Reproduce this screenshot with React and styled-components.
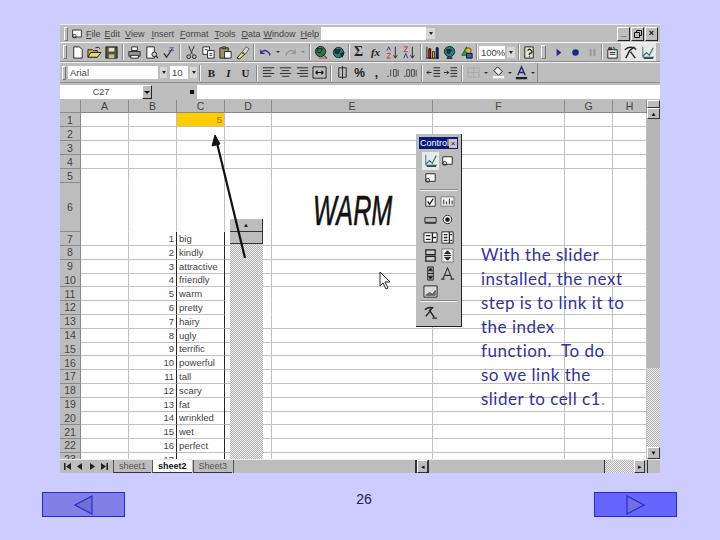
import React from "react";
import styled, { createGlobalStyle } from "styled-components";

const Global = createGlobalStyle`
  html, body { margin: 0; padding: 0; background: #ccccff; }
  body { font-family: "Liberation Sans", Arial, sans-serif; }
`;

const dither = `repeating-conic-gradient(#b4b4b4 0 25%, #ececec 0 50%) 0 0 / 2px 2px`;
const GRAY = "#bdbdbd";

const Slide = styled.div`
  width: 720px;
  height: 540px;
  padding-top: 24px;
  box-sizing: border-box;
  overflow: hidden;
`;
const Excel = styled.div`
  width: 600px;
  margin-left: 60px;
  background: ${GRAY};
  color: #333;
  font-size: 9px;
`;
const MenuBar = styled.div`
  height: 18px;
  display: flex;
  align-items: center;
  padding-left: 2px;
  box-sizing: border-box;
  border-top: 1px solid #eee;
`;
const Grip = styled.div`
  width: ${(p) => p.$w || 3}px;
  height: 14px;
  flex: none;
  margin: 0 ${(p) => p.$mr ?? 2}px 0 ${(p) => p.$ml ?? 2}px;
  border: 1px solid;
  border-color: #fff #777 #777 #fff;
  box-sizing: border-box;
`;
const MenuIcon = styled.span`
  margin-right: 2px;
  display: flex;
`;
const MenuItem = styled.span`
  margin-right: ${(p) => p.$gap}px;
  font-size: 9px;
  color: #444;
  &::first-letter { text-decoration: underline; }
`;
const QuestionBox = styled.div`
  width: 105px;
  height: 13px;
  background: #fff;
  margin-left: 2px;
  display: flex;
  flex: none;
`;
const WinButtons = styled.div`
  margin-left: auto;
  display: flex;
  gap: 1px;
  padding-right: 2px;
`;
const WinButton = styled.div`
  width: 11px;
  height: 12px;
  border: 1px solid;
  border-color: #fff #222 #222 #fff;
  font: bold 9px/11px "Liberation Sans", sans-serif;
  color: #111;
  text-align: center;
  display: flex;
  align-items: center;
  justify-content: center;
`;
const ToolBar = styled.div`
  height: ${(p) => p.$h}px;
  display: flex;
  align-items: center;
  box-sizing: border-box;
  border-top: 1px solid #f4f4f4;
  border-bottom: 1px solid #8a8a8a;
`;
const ToolStrip = styled.div`
  display: flex;
  align-items: center;
  height: 100%;
  width: ${(p) => p.$w}px;
  border-right: 1px solid #8a8a8a;
  box-sizing: border-box;
`;
const Tool = styled.div`
  width: ${(p) => p.$w || 17}px;
  height: 18px;
  flex: none;
  display: flex;
  align-items: center;
  justify-content: center;
  font: ${(p) => p.$font || "bold 11px 'Liberation Serif', serif"};
  color: #222;
  background: ${(p) => (p.$on ? "#e8e8e8" : "transparent")};
`;
const Sep = styled.div`
  width: 2px;
  height: 16px;
  flex: none;
  margin: 0 ${(p) => p.$mr ?? 2}px 0 ${(p) => p.$ml ?? 2}px;
  border-left: 1px solid #8a8a8a;
  border-right: 1px solid #f4f4f4;
  box-sizing: border-box;
`;
const Caret = styled.div`
  width: ${(p) => p.$w || 8}px;
  flex: none;
  display: flex;
  justify-content: center;
  &::after {
    content: "";
    border-left: 2px solid transparent;
    border-right: 2px solid transparent;
    border-top: 2px solid ${(p) => p.$c || "#333"};
  }
`;
const Combo = styled.div`
  width: ${(p) => p.$w}px;
  margin-left: ${(p) => p.$ml || 0}px;
  height: 13px;
  flex: none;
  background: #fff;
  font-size: 9.5px;
  line-height: 13px;
  color: #444;
  padding-left: 2px;
  box-sizing: border-box;
`;
const ComboArrow = styled.div`
  width: ${(p) => p.$w || 8}px;
  height: 11px;
  margin-left: ${(p) => p.$ml ?? 1}px;
  flex: none;
  background: #d8d8d8;
  display: flex;
  align-items: center;
  justify-content: center;
  &::after {
    content: "";
    border-left: 2px solid transparent;
    border-right: 2px solid transparent;
    border-top: 3px solid #222;
  }
`;
const FormulaBar = styled.div`
  height: 14px;
  margin: 2px 0 1px;
  display: flex;
  align-items: stretch;
`;
const NameBox = styled.div`
  width: 82px;
  background: #fff;
  text-align: center;
  font-size: 9px;
  line-height: 14px;
  color: #444;
`;
const NameArrow = styled.div`
  width: 10px;
  border: 1px solid;
  border-color: #fff #222 #222 #fff;
  box-sizing: border-box;
  display: flex;
  align-items: center;
  justify-content: center;
  &::after {
    content: "";
    border-left: 3px solid transparent;
    border-right: 3px solid transparent;
    border-top: 3px solid #111;
  }
`;
const FormulaGray = styled.div`
  width: 45px;
  display: flex;
  align-items: center;
  justify-content: flex-end;
  padding-right: 3px;
  box-sizing: border-box;
  &::after { content: ""; width: 4px; height: 4px; background: #111; }
`;
const FormulaInput = styled.div`
  flex: 1;
  background: #fff;
`;
const SheetArea = styled.div`
  position: relative;
  display: flex;
  height: 359px;
  overflow: hidden;
`;
const Grid = styled.div`
  width: 587px;
  background: #fff;
`;
const COLS = "21px 48px 48px 48px 47px 161px 132px 48px 34px";
const Row = styled.div`
  display: grid;
  grid-template-columns: ${COLS};
  height: ${(p) => p.$h}px;
`;
const HeadCell = styled.div`
  background: ${GRAY};
  border-right: 1px solid #8a8a8a;
  border-bottom: 1px solid #8a8a8a;
  box-sizing: border-box;
  display: flex;
  align-items: center;
  justify-content: center;
  font-size: 10.5px;
  color: #444;
`;
const Cell = styled.div`
  box-sizing: border-box;
  border-right: 1px solid ${(p) => (p.$dark ? "#222" : "#c0c0c0")};
  border-bottom: 1px solid ${(p) => (p.$noLine ? "transparent" : "#c0c0c0")};
  background: ${(p) => p.$bg || "transparent"};
  color: ${(p) => p.$color || "#444"};
  font-size: 9.5px;
  line-height: 13px;
  white-space: nowrap;
  padding: 0 2px;
  text-align: ${(p) => (p.$right ? "right" : "left")};
`;
const VScroll = styled.div`
  flex: 1;
  display: flex;
  flex-direction: column;
  background: ${GRAY};
`;
const ScrollBtn = styled.div`
  height: ${(p) => p.$h || 11}px;
  flex: none;
  border: 1px solid;
  border-color: #fff #333 #333 #fff;
  box-sizing: border-box;
  background: ${GRAY};
  display: flex;
  align-items: center;
  justify-content: center;
  font-size: 6px;
  color: #111;
`;
const VThumb = styled.div`
  height: 249px;
  flex: none;
  background: #b4b4b4;
`;
const VDither = styled.div`
  flex: 1;
  background: ${dither};
`;
const BottomBar = styled.div`
  height: 14px;
  display: flex;
  align-items: center;
  border-top: 1px solid #eee;
  box-sizing: border-box;
  padding-left: 2px;
`;
const TabNav = styled.svg`
  width: 12px;
  height: 11px;
  flex: none;
`;
const SheetTab = styled.div`
  height: 13px;
  flex: none;
  margin-left: ${(p) => p.$ml || 0}px;
  padding: 0 5px;
  font-size: 9px;
  line-height: 12px;
  color: ${(p) => (p.$active ? "#111" : "#555")};
  font-weight: ${(p) => (p.$active ? 700 : 400)};
  background: ${(p) => (p.$active ? "#fff" : "transparent")};
  border-left: 1px solid #555;
  border-bottom: 1px solid #333;
  box-sizing: border-box;
`;
const TabEnd = styled.div`
  flex: 1;
  height: 100%;
  border-left: 1px solid #555;
  margin-left: 1px;
  border-right: 2px solid #333;
`;
const HBar = styled.div`
  width: 228px;
  height: 100%;
  flex: none;
  display: flex;
  align-items: stretch;
`;
const HThumb = styled.div`
  width: 175px;
  border-left: 1px solid #333;
  border-right: 1px solid #333;
`;
const HDither = styled.div`
  flex: 1;
  background: ${dither};
`;
const HBtn = styled.div`
  width: 11px;
  flex: none;
  border: 1px solid;
  border-color: #fff #333 #333 #fff;
  box-sizing: border-box;
  font-size: 7px;
  line-height: 11px;
  text-align: center;
  color: #111;
`;
const Corner = styled.div`
  width: 13px;
  height: 100%;
  flex: none;
  border-left: 1px solid #333;
  margin-left: 2px;
  box-sizing: border-box;
`;

/* things floating over the sheet */
const Arrow = styled.svg`
  position: absolute;
  left: 145px;
  top: 25px;
  z-index: 3;
`;
const SliderCtl = styled.div`
  position: absolute;
  left: 170px;
  top: 119px;
  width: 33px;
  height: 240px;
  display: flex;
  flex-direction: column;
`;
const SliderBtn = styled.div`
  height: ${(p) => p.$h}px;
  flex: none;
  background: ${GRAY};
  border-right: 1px solid #333;
  border-bottom: 1px solid #333;
  box-sizing: border-box;
  display: flex;
  align-items: center;
  justify-content: center;
  &::after {
    content: "${(p) => p.$mark || ""}";
    font-size: 6px;
    color: #111;
  }
`;
const SliderTrack = styled.div`
  flex: 1;
  background: ${dither};
`;
const Warm = styled.div`
  position: absolute;
  left: 253px;
  top: 89px;
  font: italic 400 42px/44px "Liberation Sans Narrow", "Liberation Sans", sans-serif;
  color: #111;
  transform-origin: left top;
  transform: scaleX(0.6);
  -webkit-text-stroke: 0.6px #111;
`;
const Pointer = styled.svg`
  position: absolute;
  left: 319px;
  top: 171px;
`;
const Toolbox = styled.div`
  position: absolute;
  left: 356px;
  top: 34px;
  width: 46px;
  height: 193px;
  background: ${GRAY};
  box-sizing: border-box;
  border-right: 1px solid #222;
  border-bottom: 1px solid #222;
  padding: 3px 3px 0;
  display: flex;
  flex-direction: column;
`;
const BoxTitle = styled.div`
  height: 12px;
  background: #0a1a78;
  color: #fff;
  font-size: 9px;
  line-height: 12px;
  padding-left: 1px;
  display: flex;
  justify-content: space-between;
  align-items: center;
`;
const BoxClose = styled.span`
  width: 9px;
  height: 9px;
  background: #c8c8c8;
  color: #111;
  font-size: 8px;
  line-height: 9px;
  text-align: center;
  margin-right: 1px;
`;
const BoxGrid = styled.div`
  display: grid;
  grid-template-columns: 17px 17px;
  grid-auto-rows: ${(p) => p.$r}px;
  justify-content: center;
  margin-top: ${(p) => p.$mt || 0}px;
  justify-items: center;
  align-items: center;
`;
const BoxRule = styled.div`
  height: 1px;
  margin: ${(p) => p.$m};
  background: #f2f2f2;
  border-top: 1px solid #8a8a8a;
`;
const Note = styled.div`
  position: absolute;
  left: 421px;
  top: 143px;
  font: 17px/24px Lato, "Open Sans", sans-serif;
  letter-spacing: 0.5px;
  color: #333399;
`;
const NoteLine = styled.div`
  white-space: pre;
`;
const Dot = styled.span`
  color: #cc9933;
`;
const Footer = styled.div`
  display: flex;
  justify-content: space-between;
  padding: 0 43px 0 42px;
  margin-top: 19px;
`;
const NavButton = styled.div`
  width: 83px;
  height: 25px;
  box-sizing: border-box;
  border: 1px solid #2a2acc;
  background: ${(p) => p.$bg};
  display: flex;
  align-items: center;
  justify-content: center;
`;
const PageNo = styled.div`
  margin: 0 0 0 9px;
  font: 14px/14px "Liberation Sans Narrow", "Liberation Sans", sans-serif;
  color: #222255;
`;

const Ico = ({ children }) => (
  <svg width="15" height="15" viewBox="0 0 16 16" fill="none" strokeWidth="1" stroke="#222">
    {children}
  </svg>
);

const icons = {
  newDoc: <path d="M4 2h6l3 3v9H4z" fill="#fff" />,
  open: (
    <>
      <path d="M1 13V5h5l1 1h4v7z" fill="#c9b040" />
      <path d="M1 13l3-5h11l-4 5z" fill="#e8d870" />
      <path d="M9 3q3-2 5 1" />
    </>
  ),
  save: (
    <>
      <path d="M2 2h12v12H2z" fill="#55552a" />
      <path d="M5 3h6v4H5z" fill="#ddd" stroke="none" />
      <path d="M5 10h6v4H5z" fill="#bbb" stroke="none" />
    </>
  ),
  print: (
    <>
      <path d="M5 2h6v4H5z" fill="#fff" />
      <path d="M2 7h12v5H2z" fill="#999" />
      <path d="M4 11h8v3H4z" fill="#fff" />
    </>
  ),
  preview: (
    <>
      <path d="M3 2h8v12H3z" fill="#fff" />
      <circle cx="11" cy="10" r="2.5" fill="#ccc" />
      <path d="M13 12l2 2" strokeWidth="1.5" />
    </>
  ),
  spell: (
    <>
      <path d="M3 9l3 4 6-9" stroke="#333" strokeWidth="1.4" />
      <path d="M9 3h5M8 6h6" stroke="#55a" />
    </>
  ),
  cut: (
    <>
      <path d="M5 1l4 9M11 1L7 10" stroke="#334" />
      <circle cx="5" cy="12.5" r="2" />
      <circle cx="11" cy="12.5" r="2" />
    </>
  ),
  copy: (
    <>
      <path d="M2 2h7v8H2z" fill="#fff" />
      <path d="M7 6h7v8H7z" fill="#fff" />
      <path d="M4 5h3M9 9h3M9 11h3" />
    </>
  ),
  paste: (
    <>
      <path d="M2 3h9v11H2z" fill="#99926a" />
      <path d="M7 7h7v7H7z" fill="#fff" />
      <path d="M5 2h3v2H5z" fill="#aaa" />
    </>
  ),
  brush: (
    <>
      <path d="M2 14l5-6 3 2-5 5z" fill="#e8e070" />
      <path d="M8 7l4-5 3 2-4 6z" fill="#d8d8d8" stroke="#556" />
    </>
  ),
  undo: <path d="M3 9q3-5 7-2t2 4M3 5v4h4" stroke="#2a2a90" strokeWidth="1.4" />,
  redo: <path d="M13 9q-3-5-7-2t-2 4M13 5v4H9" stroke="#999" strokeWidth="1.4" />,
  globe: (
    <>
      <circle cx="7" cy="7" r="5.5" fill="#2b7a4b" />
      <path d="M3 4h6l-2 4H4zM9 10l5 4" stroke="#123" />
      <path d="M5 14h9" stroke="#c33" />
    </>
  ),
  web: (
    <>
      <circle cx="8" cy="8" r="5.5" fill="#2b7a8b" />
      <path d="M4 5h6l-2 4H5zM10 9l4-1-2 5z" fill="#143" />
    </>
  ),
  sortA: (
    <>
      <path d="M2 6l2-4 2 4" stroke="#33a" />
      <path d="M2 9h4l-4 5h4" stroke="#c33" />
      <path d="M11 2v11M9 11l2 3 2-3" />
    </>
  ),
  sortZ: (
    <>
      <path d="M2 2h4L2 7h4" stroke="#c33" />
      <path d="M2 14l2-5 2 5" stroke="#33a" />
      <path d="M11 2v11M9 11l2 3 2-3" />
    </>
  ),
  chart: (
    <>
      <path d="M1 14h14M2 14V2" />
      <path d="M4 4h2v10H4z" fill="#c02a2a" stroke="#300" />
      <path d="M8 7h2v7H8z" fill="#d8c020" stroke="#330" />
      <path d="M12 3h2v11h-2z" fill="#2a3a90" stroke="#003" />
    </>
  ),
  map: (
    <>
      <circle cx="8" cy="7" r="5.5" fill="#2b7a8b" />
      <path d="M5 5h5l-2 4H6z" fill="#143" />
      <path d="M5 14h6" strokeWidth="2" stroke="#333" />
    </>
  ),
  drawing: (
    <>
      <path d="M8 2L3 11h6z" fill="#3a9a4a" stroke="#163" />
      <circle cx="10" cy="6" r="3" fill="#d8c020" stroke="#553" />
      <path d="M8 9h6v5H8z" fill="#3060c0" stroke="#013" />
    </>
  ),
  help: (
    <>
      <path d="M3 2h9v12H3z" fill="#e8e8c8" />
      <path d="M6 6q2-3 4 0t-2 3v2M8 12v1" strokeWidth="1.4" />
    </>
  ),
  play: <path d="M6 4l5 4-5 4z" fill="#1a2a90" stroke="none" />,
  record: <circle cx="8" cy="8" r="3.5" fill="#1a2a90" stroke="none" />,
  pause: <path d="M5 4h2v8H5zM9 4h2v8H9z" fill="#999" stroke="none" />,
  mode: (
    <>
      <path d="M3 5h10v9H3z" fill="#eee" />
      <path d="M5 8h6M5 10h6" />
      <path d="M4 3h3v2H4z" fill="#c33" />
      <path d="M9 2l2 4" stroke="#2a7a4a" strokeWidth="1.5" />
    </>
  ),
  tools: (
    <>
      <path d="M2 5q4-4 9-2l-4 3-4 8" stroke="#222" strokeWidth="1.6" />
      <path d="M8 7l5 7M11 2l3 3" stroke="#333" strokeWidth="1.6" />
    </>
  ),
  design: (
    <>
      <path d="M3 2v11h12" stroke="#2a7a7a" />
      <path d="M3 12l4-4 3 3 4-8" stroke="#2a7a7a" strokeWidth="1.3" />
      <path d="M4 14h10" stroke="#222" strokeWidth="1.5" />
    </>
  ),
  left: <path d="M2 3h12M2 6h9M2 9h12M2 12h9" />,
  center: <path d="M2 3h12M4 6h8M2 9h12M4 12h8" />,
  right: <path d="M2 3h12M5 6h9M2 9h12M5 12h9" />,
  merge: (
    <>
      <path d="M1 2h14v12H1z" />
      <path d="M4 8h8M4 8l2-2M4 8l2 2M12 8l-2-2M12 8l-2 2" stroke="#111" strokeWidth="1.3" />
    </>
  ),
  money: (
    <>
      <path d="M4 3h8v10H4z" />
      <path d="M8 1v14" />
    </>
  ),
  incDec: <path d="M1 12h2M5 5v7M8 5h3v7H8zM13 5v7" stroke="#444" />,
  decDec: <path d="M1 12h2M4 5h3v7H4zM9 5h3v7H9zM14 5v7" stroke="#444" />,
  indentOut: <path d="M8 3h7M8 6h7M8 9h7M8 12h7M6 8H1M3 6L1 8l2 2" />,
  indentIn: <path d="M8 3h7M8 6h7M8 9h7M8 12h7M1 8h5M4 6l2 2-2 2" />,
  border: <path d="M2 3h12v10H2zM2 8h12M8 3v10" stroke="#999" strokeDasharray="1 1" />,
  fill: (
    <>
      <path d="M7 2l5 5-4 4-5-5z" fill="#eee" />
      <path d="M2 13h12" stroke="#fff" strokeWidth="2.5" />
    </>
  ),
  color: (
    <>
      <path d="M4 11l4-9 4 9M6 8h4" stroke="#22226a" strokeWidth="1.4" />
      <path d="M2 14h12" stroke="#222" strokeWidth="2.5" />
    </>
  ),
  more: (
    <>
      <path d="M3 4h10v8H3z" fill="#fff" />
      <circle cx="5" cy="11" r="2" />
    </>
  ),
  check: (
    <>
      <path d="M3 3h10v10H3z" fill="#fff" />
      <path d="M5 8l2 3 4-6" strokeWidth="1.5" />
    </>
  ),
  txt: (
    <>
      <path d="M1 3h14v10H1z" fill="#eee" stroke="#777" />
      <path d="M4 11V6M7 11V8M10 11V5M13 11V7" />
    </>
  ),
  btn: <path d="M2 6h12v5H2z M2 12h12" fill="#bbb" />,
  radio: (
    <>
      <circle cx="8" cy="8" r="4.5" fill="#fff" />
      <circle cx="8" cy="8" r="2" fill="#111" />
    </>
  ),
  list: (
    <>
      <path d="M1 3h14v10H1z" fill="#fff" />
      <path d="M3 6h5M3 10h5M10 8h4M10 3v10" strokeWidth="1.4" />
    </>
  ),
  combo: (
    <>
      <path d="M2 2h12v12H2z" fill="#fff" />
      <path d="M4 5h4M4 8h4M4 11h4M10 2v12M11 5h2M11 11h2" strokeWidth="1.4" />
    </>
  ),
  toggle: <path d="M3 2h10v5H3zM3 9h10v5H3zM3 7h10" fill="#ccc" strokeWidth="1.3" />,
  spin: (
    <>
      <path d="M2 1h12v14H2z" fill="#eee" stroke="#777" />
      <path d="M8 3l3 3H5zM8 13l3-3H5zM4 8h8" fill="#222" />
    </>
  ),
  scrollV: (
    <>
      <path d="M5 1h6v14H5z" fill="#aaa" />
      <path d="M8 2l2 3H6zM8 14l2-3H6zM5 8h6" fill="#111" />
    </>
  ),
  bigA: <path d="M1 14h4M11 14h4M3 14L8 2l5 12M5 10h6" stroke="#333" strokeWidth="1.2" />,
  image: (
    <>
      <path d="M1 2h14v12H1z" fill="#ddd" />
      <path d="M3 12l4-3 3 2 3-4v5z" fill="#777" stroke="#555" />
    </>
  ),
  wrench: (
    <>
      <path d="M2 5q4-3 8-2l-3 3 5 7" strokeWidth="1.6" />
      <path d="M3 12l5-6M10 14h5" strokeWidth="1.3" />
    </>
  ),
};

const T = ({ i, w, on }) => (
  <Tool $w={w} $on={on}>
    <Ico>{icons[i]}</Ico>
  </Tool>
);

const menus = [
  ["File", 4],
  ["Edit", 5],
  ["View", 7],
  ["Insert", 6],
  ["Format", 6],
  ["Tools", 6],
  ["Data", 3],
  ["Window", 5],
  ["Help", 0],
];

const words = [
  "big", "kindly", "attractive", "friendly", "warm", "pretty", "hairy", "ugly", "terrific",
  "powerful", "tall", "scary", "fat", "wrinkled", "wet", "perfect", "",
];

const noteLines = [
  "With the slider",
  "installed, the next",
  "step is to link it to",
  "the index",
  "function.  To do",
  "so we link the",
];

const navPaths = ["M2 2h1.5v7H2zM9 2v7L4 5.5z", "M8 2v7L3 5.5z", "M4 2v7l5-3.5z", "M3 2v7l5-3.5zM8.5 2H10v7H8.5z"];

const colNames = ["A", "B", "C", "D", "E", "F", "G", "H"];
const rowHeight = (n) => (n === 6 ? 49 : n < 6 ? 14 : 13.8);

const SheetRow = ({ n }) => {
  const idx = n - 7;
  const hideAll = n === 5 || n === 6;
  const hideRight = n === 11 || n === 12;
  return (
    <Row $h={rowHeight(n)}>
      <HeadCell>{n}</HeadCell>
      <Cell $noLine={hideAll} />
      <Cell $noLine={hideAll} $right $dark={n >= 7}>
        {n >= 7 ? idx + 1 : ""}
      </Cell>
      <Cell
        $noLine={hideAll}
        $dark={n >= 7}
        $right={n === 1}
        $bg={n === 1 ? "#ffcc00" : undefined}
        $color={n === 1 ? "#c26a00" : undefined}
      >
        {n === 1 ? 5 : n >= 7 ? words[idx] : ""}
      </Cell>
      <Cell $noLine={hideAll || hideRight} />
      <Cell $noLine={hideAll || hideRight} />
      <Cell $noLine={hideAll} />
      <Cell $noLine={hideAll} />
      <Cell $noLine={hideAll} />
    </Row>
  );
};

const Sheet = () => (
  <Grid>
    <Row $h={13}>
      <HeadCell />
      {colNames.map((c) => (
        <HeadCell key={c}>{c}</HeadCell>
      ))}
    </Row>
    {Array.from({ length: 23 }, (_, i) => (
      <SheetRow key={i} n={i + 1} />
    ))}
  </Grid>
);

const ControlBox = () => (
  <Toolbox>
    <BoxTitle>
      Control
      <BoxClose>×</BoxClose>
    </BoxTitle>
    <BoxGrid $r={17} $mt={3}>
      <T i="design" on />
      <T i="more" />
      <T i="more" />
    </BoxGrid>
    <BoxRule $m="3px 1px 2px" />
    <BoxGrid $r={17.9}>
      <T i="check" />
      <T i="txt" />
      <T i="btn" />
      <T i="radio" />
      <T i="list" />
      <T i="combo" />
      <T i="toggle" />
      <T i="spin" />
      <T i="scrollV" />
      <T i="bigA" />
      <T i="image" />
    </BoxGrid>
    <BoxRule $m="0 1px 1px" />
    <BoxGrid $r={18}>
      <T i="wrench" />
    </BoxGrid>
  </Toolbox>
);

export default function App() {
  return (
    <Slide>
      <Global />
      <Excel>
        <MenuBar>
          <Grip $w={4} $ml={2} $mr={2} />
          <Tool $w={14}>
            <Ico>{icons.more}</Ico>
          </Tool>
          <MenuIcon />
          {menus.map(([m, g]) => (
            <MenuItem key={m} $gap={g}>
              {m}
            </MenuItem>
          ))}
          <QuestionBox />
          <ComboArrow $w={9} $ml={0} />
          <WinButtons>
            <WinButton>_</WinButton>
            <WinButton>
              <svg width="8" height="8" viewBox="0 0 8 8" fill="none" stroke="#111">
                <path d="M2.5 2.5V.5h5v5h-2M.5 2.5h5v5h-5z" />
              </svg>
            </WinButton>
            <WinButton>×</WinButton>
          </WinButtons>
        </MenuBar>
        <ToolBar $h={20}>
          <Grip $ml={3} $mr={2} $w={4} />
          <T i="newDoc" />
          <T i="open" />
          <T i="save" />
          <Sep />
          <T i="print" />
          <T i="preview" />
          <T i="spell" />
          <Sep />
          <T i="cut" />
          <T i="copy" />
          <T i="paste" />
          <T i="brush" />
          <Sep />
          <T i="undo" />
          <Caret />
          <T i="redo" />
          <Caret $c="#888" />
          <Sep />
          <T i="globe" />
          <T i="web" />
          <Sep $ml={1} $mr={0} />
          <Tool $font="bold 14px 'Liberation Serif', serif">Σ</Tool>
          <Tool $font="italic bold 11px 'Liberation Serif', serif">fx</Tool>
          <T i="sortA" />
          <T i="sortZ" />
          <Sep />
          <T i="chart" />
          <T i="map" />
          <T i="drawing" />
          <Sep $ml={1} $mr={0} />
          <Combo $w={26} $ml={1}>
            100%
          </Combo>
          <ComboArrow $w={8} $ml={2} />
          <Sep $ml={3} $mr={1} />
          <T i="help" />
          <Grip $w={5} $ml={3} $mr={4} />
          <T i="play" />
          <T i="record" />
          <T i="pause" />
          <Sep $ml={0} $mr={0} />
          <T i="mode" w={18} />
          <T i="tools" w={18} on />
          <T i="design" w={17} on />
        </ToolBar>
        <ToolBar $h={21}>
          <ToolStrip $w={478}>
            <Grip $ml={2} $mr={2} $w={4} />
            <Combo $w={90}>Arial</Combo>
            <ComboArrow $w={7} $ml={2} />
            <Combo $w={18} $ml={3}>
              10
            </Combo>
            <ComboArrow $w={7} $ml={2} />
            <Sep $ml={2} $mr={2} />
            <Tool $font="bold 11px 'Liberation Serif', serif">B</Tool>
            <Tool $font="italic bold 11px 'Liberation Serif', serif">I</Tool>
            <Tool $font="bold 11px 'Liberation Serif', serif">U</Tool>
            <Sep />
            <T i="left" />
            <T i="center" />
            <T i="right" />
            <T i="merge" />
            <Sep />
            <T i="money" />
            <Tool $font="bold 12px 'Liberation Sans', sans-serif">%</Tool>
            <Tool $font="bold 12px 'Liberation Sans', sans-serif">,</Tool>
            <T i="incDec" />
            <T i="decDec" />
            <Sep />
            <T i="indentOut" />
            <T i="indentIn" />
            <Sep />
            <T i="border" />
            <Caret />
            <T i="fill" />
            <Caret $w={6} />
            <T i="color" />
            <Caret $w={6} />
          </ToolStrip>
        </ToolBar>
        <FormulaBar>
          <NameBox>C27</NameBox>
          <NameArrow />
          <FormulaGray />
          <FormulaInput />
        </FormulaBar>
        <SheetArea>
          <Sheet />
          <VScroll>
            <ScrollBtn $h={8} />
            <ScrollBtn>▲</ScrollBtn>
            <VThumb />
            <VDither />
            <ScrollBtn $h={12}>▼</ScrollBtn>
          </VScroll>
          <Arrow width="50" height="140" viewBox="0 0 50 140">
            <line x1="40" y1="133" x2="12" y2="18" stroke="#111" strokeWidth="2.2" />
            <path d="M10 10l-3 11 8-2z" fill="#111" stroke="#111" />
          </Arrow>
          <SliderCtl>
            <SliderBtn $h={13} $mark="▲" />
            <SliderBtn $h={12} />
            <SliderTrack />
          </SliderCtl>
          <Warm>WARM</Warm>
          <Pointer width="14" height="19" viewBox="0 0 14 19">
            <path d="M1 1v14l3-3 3 6 2-1-3-6h5z" fill="#fff" stroke="#222" />
          </Pointer>
          <ControlBox />
          <Note>
            {noteLines.map((l) => (
              <NoteLine key={l}>{l}</NoteLine>
            ))}
            <NoteLine>
              slider to cell c1<Dot>.</Dot>
            </NoteLine>
          </Note>
        </SheetArea>
        <BottomBar>
          {navPaths.map((d) => (
            <TabNav key={d} viewBox="0 0 12 11">
              <path d={d} fill="#222" />
            </TabNav>
          ))}
          <SheetTab $ml={3}>sheet1</SheetTab>
          <SheetTab $active $ml={1}>
            sheet2
          </SheetTab>
          <SheetTab $ml={1}>Sheet3</SheetTab>
          <TabEnd />
          <HBar>
            <HBtn>◂</HBtn>
            <HThumb />
            <HDither />
            <HBtn>▸</HBtn>
          </HBar>
          <Corner />
        </BottomBar>
      </Excel>
      <Footer>
        <NavButton $bg="#8080e6">
          <svg width="22" height="20" viewBox="0 0 22 20">
            <path d="M19 1v18L2 10z" fill="#7070d4" stroke="#2a2acc" strokeWidth="1.2" />
          </svg>
        </NavButton>
        <PageNo>26</PageNo>
        <NavButton $bg="#6666ff">
          <svg width="22" height="20" viewBox="0 0 22 20">
            <path d="M3 1v18l17-9z" fill="#7070e0" stroke="#2a2acc" strokeWidth="1.2" />
          </svg>
        </NavButton>
      </Footer>
    </Slide>
  );
}
